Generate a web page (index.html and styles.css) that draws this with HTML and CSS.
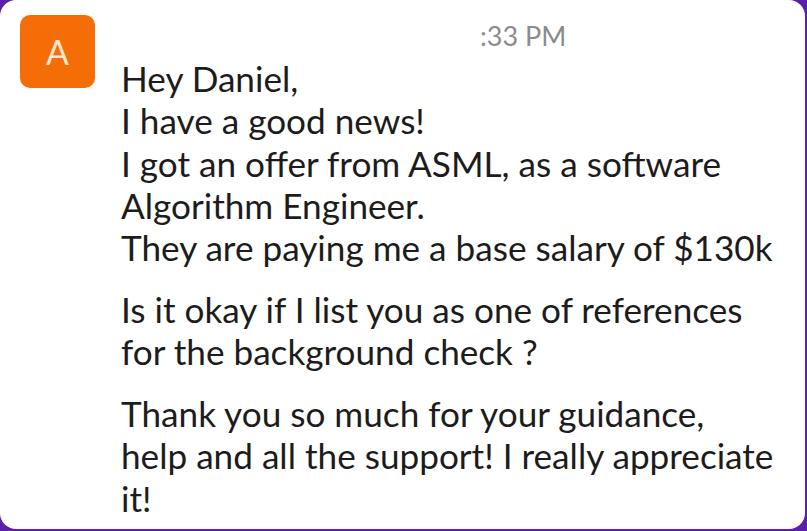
FILE: index.html
```html
<!DOCTYPE html>
<html lang="en">
<head>
<meta charset="utf-8">
<title>Message</title>
<link rel="stylesheet" href="styles.css">
</head>
<body>
<div class="card">
  <div class="avatar">A</div>
  <div class="content">
    <div class="time">:33 PM</div>
    <div class="body">
      <p>Hey Daniel,<br>I have a good news!<br>I got an offer from ASML, as a software Algorithm Engineer.<br>They are paying me a base salary of $130k</p>
      <p>Is it okay if I list you as one of references for the background check ?</p>
      <p>Thank you so much for your guidance, help and all the support! I really appreciate it!</p>
    </div>
  </div>
</div>
</body>
</html>
```

FILE: styles.css
```css
html, body {
  margin: 0;
  padding: 0;
  width: 807px;
  height: 531px;
  overflow: hidden;
  background: #5b1fa8;
}
.card {
  box-sizing: border-box;
  width: 805px;
  height: 529px;
  background: #ffffff;
  border-radius: 16px;
  display: flex;
  gap: 26px;
  padding: 15px 0 0 20px;
  font-family: Lato, "Noto Sans", sans-serif;
  color: #1d1c1d;
}
.avatar {
  flex: none;
  width: 75px;
  height: 73px;
  border-radius: 10px;
  background: #f46d07;
  color: #fde7cf;
  font-size: 34px;
  display: flex;
  align-items: center;
  justify-content: center;
}
.content {
  flex: 1;
}
.time {
  padding-left: 359px;
  font-size: 27px;
  line-height: 42px;
  color: #8b8b8b;
}
.body {
  width: 656px;
  font-size: 35.15px;
  line-height: 42.3px;
}
.body p {
  margin: 0 0 19.5px;
}
```
